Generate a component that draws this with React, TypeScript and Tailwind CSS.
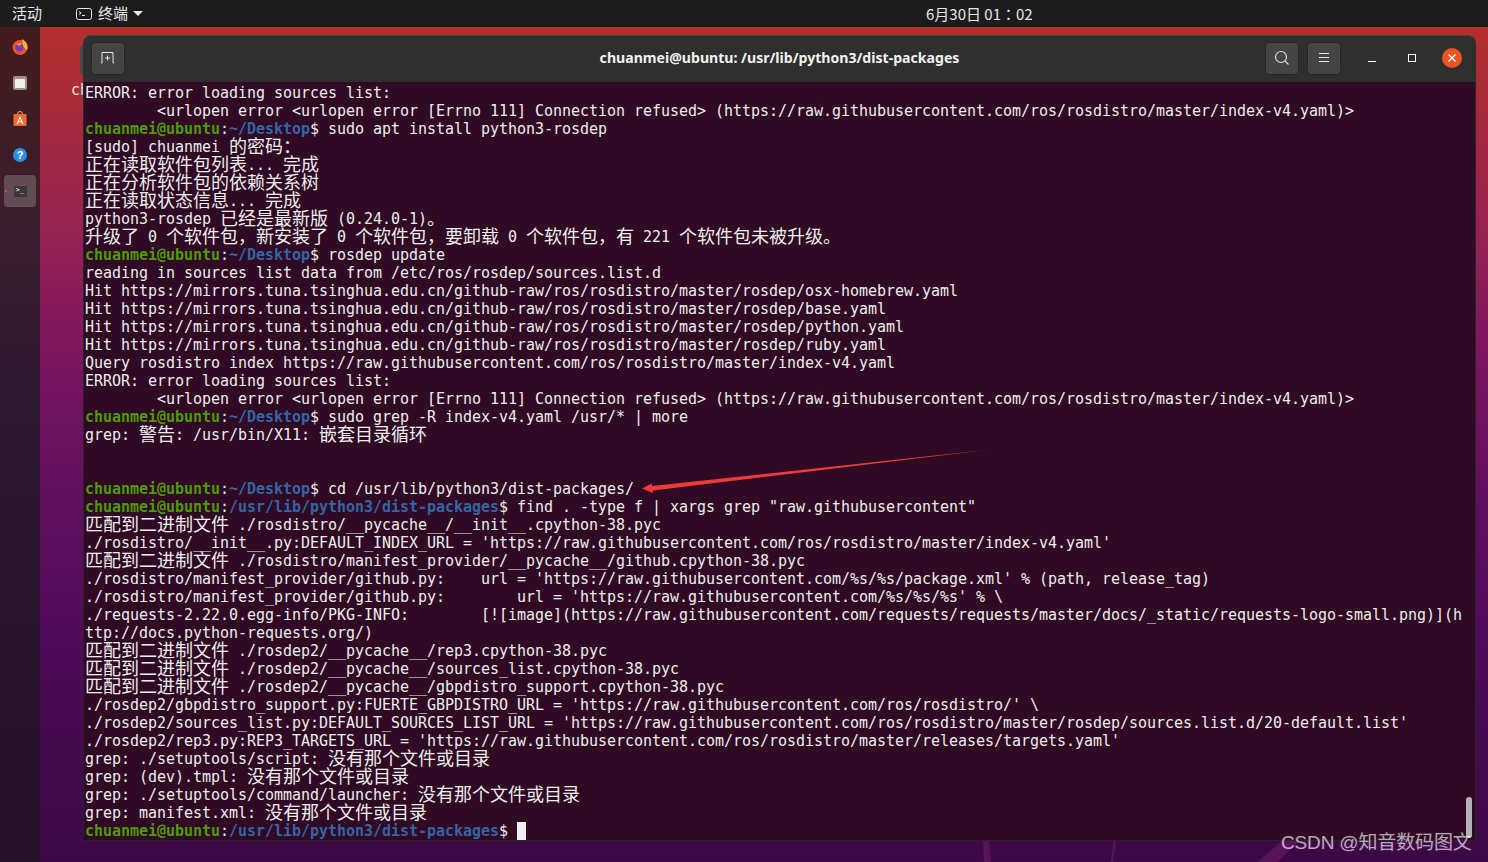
import React from "react";

const user = "chuanmei@ubuntu";
const pkg = "/usr/lib/python3/dist-packages";
const raw = "https://raw.githubusercontent.com";
const mirror = "https://mirrors.tuna.tsinghua.edu.cn/github-raw/ros/rosdistro/master/rosdep";
const refused = `        <urlopen error <urlopen error [Errno 111] Connection refused> (${raw}/ros/rosdistro/master/index-v4.yaml)>`;

type Line = string | { path: string; cmd: string };

const lines: Line[] = [
  "ERROR: error loading sources list:",
  refused,
  { path: "~/Desktop", cmd: "$ sudo apt install python3-rosdep" },
  "[sudo] chuanmei 的密码：",
  "正在读取软件包列表... 完成",
  "正在分析软件包的依赖关系树",
  "正在读取状态信息... 完成",
  "python3-rosdep 已经是最新版 (0.24.0-1)。",
  "升级了 0 个软件包，新安装了 0 个软件包，要卸载 0 个软件包，有 221 个软件包未被升级。",
  { path: "~/Desktop", cmd: "$ rosdep update" },
  "reading in sources list data from /etc/ros/rosdep/sources.list.d",
  `Hit ${mirror}/osx-homebrew.yaml`,
  `Hit ${mirror}/base.yaml`,
  `Hit ${mirror}/python.yaml`,
  `Hit ${mirror}/ruby.yaml`,
  `Query rosdistro index ${raw}/ros/rosdistro/master/index-v4.yaml`,
  "ERROR: error loading sources list:",
  refused,
  { path: "~/Desktop", cmd: "$ sudo grep -R index-v4.yaml /usr/* | more" },
  "grep: 警告: /usr/bin/X11: 嵌套目录循环",
  "",
  "",
  { path: "~/Desktop", cmd: "$ cd /usr/lib/python3/dist-packages/" },
  { path: pkg, cmd: '$ find . -type f | xargs grep "raw.githubusercontent"' },
  "匹配到二进制文件 ./rosdistro/__pycache__/__init__.cpython-38.pyc",
  `./rosdistro/__init__.py:DEFAULT_INDEX_URL = '${raw}/ros/rosdistro/master/index-v4.yaml'`,
  "匹配到二进制文件 ./rosdistro/manifest_provider/__pycache__/github.cpython-38.pyc",
  `./rosdistro/manifest_provider/github.py:    url = '${raw}/%s/%s/package.xml' % (path, release_tag)`,
  `./rosdistro/manifest_provider/github.py:        url = '${raw}/%s/%s/%s' % \\`,
  `./requests-2.22.0.egg-info/PKG-INFO:        [![image](${raw}/requests/requests/master/docs/_static/requests-logo-small.png)](h`,
  "ttp://docs.python-requests.org/)",
  "匹配到二进制文件 ./rosdep2/__pycache__/rep3.cpython-38.pyc",
  "匹配到二进制文件 ./rosdep2/__pycache__/sources_list.cpython-38.pyc",
  "匹配到二进制文件 ./rosdep2/__pycache__/gbpdistro_support.cpython-38.pyc",
  `./rosdep2/gbpdistro_support.py:FUERTE_GBPDISTRO_URL = '${raw}/ros/rosdistro/' \\`,
  `./rosdep2/sources_list.py:DEFAULT_SOURCES_LIST_URL = '${raw}/ros/rosdistro/master/rosdep/sources.list.d/20-default.list'`,
  `./rosdep2/rep3.py:REP3_TARGETS_URL = '${raw}/ros/rosdistro/master/releases/targets.yaml'`,
  "grep: ./setuptools/script: 没有那个文件或目录",
  "grep: (dev).tmpl: 没有那个文件或目录",
  "grep: ./setuptools/command/launcher: 没有那个文件或目录",
  "grep: manifest.xml: 没有那个文件或目录",
];

// CJK glyphs sit on two terminal cells, so they get a bigger size than the latin text
const Mixed = ({ text }: { text: string }) => (
  <>
    {text.split(/([\u3000-\u9fff\uff00-\uffef]+)/).map((part, i) =>
      i % 2 === 1 ? (
        <span key={i} className="align-[-1px] font-['Noto_Sans_CJK_SC',sans-serif] text-[18px] leading-[0] tracking-normal">
          {part}
        </span>
      ) : (
        part
      )
    )}
  </>
);

const Prompt = ({ path, cmd }: { path: string; cmd: string }) => (
  <>
    <span className="font-bold text-[#4e9a06]">{user}</span>
    :
    <span className="font-bold text-[#3465a4]">{path}</span>
    {cmd}
  </>
);

const Dock = () => (
  <aside className="flex w-10 shrink-0 flex-col items-center gap-[4px] pt-[4px] bg-[linear-gradient(180deg,#421b1c_0%,#3b1f2f_25%,#2c1630_50%,#241229_100%)]">
    <div className="flex h-8 w-8 items-center justify-center">
      <svg width="18" height="18" viewBox="0 0 18 18">
        <circle cx="9" cy="9.5" r="7.5" fill="#e8552b" />
        <path d="M11 1c3 1.500 5.500 4.500 5.500 8.500 0 1-.2 2-.6 3L12 8z" fill="#fbb62b" />
        <circle cx="8.500" cy="9.500" r="4" fill="#6a3fc0" />
        <path d="M5 6c2-1.500 5-1.500 6.500 0L8 8z" fill="#f58a2a" />
      </svg>
    </div>
    <div className="flex h-8 w-8 items-center justify-center">
      <div className="flex h-[14px] w-[14px] items-center justify-center rounded-[2px] bg-[#9b9484]">
        <div className="h-[9px] w-[10px] rounded-[1px] bg-[#f2f0ea]" />
      </div>
    </div>
    <div className="flex h-8 w-8 items-center justify-center">
      <svg width="16" height="16" viewBox="0 0 16 16">
        <path d="M5.500 3a2.500 2.500 0 0 1 5 0" fill="none" stroke="#f7a27a" strokeWidth="1" />
        <rect x="1.500" y="3" width="13" height="12" rx="1" fill="#ee6a2c" />
        <path d="M8 5l3.500 8h-1.500l-.6-1.700H6.600L6 13H4.500zM7 10.200h2L8 7.400z" fill="#fff" />
      </svg>
    </div>
    <div className="flex h-8 w-8 items-center justify-center">
      <div className="flex h-[14px] w-[14px] items-center justify-center rounded-full bg-[#2c8fe0] font-['Liberation_Sans',sans-serif] text-[11px] font-bold leading-none text-white">
        ?
      </div>
    </div>
    <div className="relative flex h-8 w-8 items-center justify-center rounded-[4px] bg-white/20">
      <span className="absolute left-[1px] top-[15px] h-[2px] w-[2px] rounded-full bg-[#e95420]" />
      <div className="h-[13px] w-[15px] rounded-[2px] border border-[#55524f] bg-[#3a3836] pl-[2px] font-['DejaVu_Sans_Mono',monospace] text-[7px] leading-[8px] text-white">
        &gt;_
      </div>
    </div>
  </aside>
);

const HeaderButton = ({ children }: { children: React.ReactNode }) => (
  <div className="flex h-[33px] w-[34px] items-center justify-center rounded-[4px] border border-[#262626] bg-[#454545]">
    {children}
  </div>
);

const TitleBar = () => (
  <header className="flex h-[47px] shrink-0 items-center rounded-t-[8px] border-t border-[#444] bg-[#2f2f2f] pb-[2px]">
    <div className="w-[211px] pl-2">
      <HeaderButton>
        <svg width="16" height="14" viewBox="0 0 16 14" fill="none" stroke="#e6e6e6" strokeWidth="1">
          <path d="M1 12h1V1.500h11V12h1M7.500 4.500v5M5 7h5" />
        </svg>
      </HeaderButton>
    </div>
    <h1 className="mb-[1px] flex-1 text-center font-['Noto_Sans',sans-serif] text-[14.1px] font-bold text-[#f2f2f2]">
      chuanmei@ubuntu: /usr/lib/python3/dist-packages
    </h1>
    <div className="flex w-[211px] items-center">
      <div className="flex gap-2">
        <HeaderButton>
          <svg width="16" height="16" viewBox="0 0 16 16" fill="none" stroke="#d8d8d8" strokeWidth="1.200">
            <circle cx="7" cy="7" r="5.500" />
            <path d="M11 11l3.500 3.500" />
          </svg>
        </HeaderButton>
        <HeaderButton>
          <svg width="12" height="10" viewBox="0 0 12 10" fill="none" stroke="#e6e6e6" strokeWidth="1">
            <path d="M1 .5h10M1 4.500h10M1 8.500h10" />
          </svg>
        </HeaderButton>
      </div>
      <div className="ml-[27px] mt-[7px] h-[1px] w-[8px] bg-white" />
      <div className="ml-[32px] h-[8px] w-[8px] border border-white" />
      <div className="ml-[26px] flex h-5 w-5 items-center justify-center rounded-full bg-[#e95420]">
        <svg width="8" height="8" viewBox="0 0 8 8" stroke="#fff" strokeWidth="1.300">
          <path d="M.5.5l7 7M7.500.5l-7 7" />
        </svg>
      </div>
    </div>
  </header>
);

const Terminal = () => (
  <main className="relative flex-1 overflow-hidden border border-t-0 border-[#262626] bg-[#300a24] pl-[1px] pt-[2px] font-['DejaVu_Sans_Mono',monospace] text-[15px] leading-[18px] tracking-[-0.03px] text-[#eeeeec]">
    {lines.map((line, i) => (
      <div key={i} className="h-[18px] whitespace-pre">
        {typeof line === "string" ? <Mixed text={line} /> : <Prompt {...line} />}
      </div>
    ))}
    <div className="flex h-[18px] items-center whitespace-pre">
      <Prompt path={pkg} cmd="$ " />
      <span className="h-[18px] w-[9px] bg-[#f0f0f0]" />
    </div>
    <div className="absolute right-[3px] bottom-[2px] h-[41px] w-[6px] rounded-full bg-[#b3b3b3]" />
  </main>
);

export default function App() {
  return (
    <div className="relative flex h-[862px] w-[1488px] flex-col overflow-hidden bg-[linear-gradient(180deg,#b2302b_3%,#9a2450_25%,#7a1560_42%,#5e0f60_60%,#4e0a58_76%,#3c0845_100%)]">
      <svg className="absolute left-[880px] top-[838px]" width="430" height="24" viewBox="0 0 430 24">
        <path d="M103 0h6l2 24h-7zM234 0h2l-3 24h-2zM406 0h17L397 24h-20z" fill="#6a1a6a" fillOpacity="0.6" />
      </svg>
      <div className="relative flex h-[27px] shrink-0 items-center bg-[#1c1c1c] pl-3 font-['Noto_Sans_CJK_SC',sans-serif] text-[15px] text-[#e8e8e8]">
        <span>活动</span>
        <svg className="ml-[34px]" width="16" height="14" viewBox="0 0 16 14" fill="none" stroke="#e8e8e8">
          <rect x=".5" y="1.500" width="15" height="11" rx="2" />
          <path d="M3 4.500l2 1.500-2 1.500M6 8.500h3" />
        </svg>
        <span className="ml-[6px]">终端</span>
        <span className="ml-[5px] h-0 w-0 border-x-[5px] border-t-[5px] border-x-transparent border-t-[#e8e8e8]" />
        <span className="ml-[783px] pt-[1px] font-['Noto_Sans_CJK_TC',sans-serif]">6月30日 01：02</span>
      </div>
      <div className="relative flex flex-1 overflow-hidden">
        <Dock />
        <div className="relative flex-1">
          <div className="absolute left-[40px] top-[18px] h-[30px] w-[8px] rounded-l-[4px] bg-[#4a4a4a]" />
          <span className="absolute left-[31px] top-[54px] font-['DejaVu_Sans_Mono',monospace] text-[15px] leading-[18px] text-[#e4e4e0]">
            ch
          </span>
          <div className="relative ml-[43px] mt-[8px] flex h-[806px] w-[1393px] flex-col">
            <TitleBar />
            <Terminal />
          </div>
        </div>
      </div>
      <svg className="pointer-events-none absolute left-[640px] top-[448px]" width="350" height="46" viewBox="0 0 350 46">
        <path d="M2 40.500 L12 35.500 L12 38 L346 2 L13 42.500 L13 45 Z" fill="#f03a3a" />
      </svg>
      <span className="absolute left-[1281px] top-[831px] font-['Liberation_Sans','Noto_Sans_CJK_SC',sans-serif] text-[19px] leading-6 tracking-[-0.15px] text-white/65">
        CSDN @知音数码图文
      </span>
    </div>
  );
}
